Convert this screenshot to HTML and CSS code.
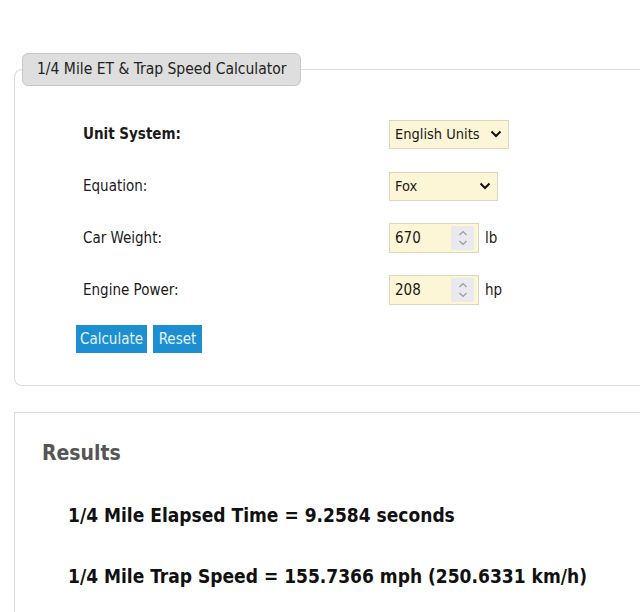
FILE: index.html
```html
<!DOCTYPE html>
<html lang="en">
<head>
    <meta charset="UTF-8">
    <meta name="viewport" content="width=device-width, initial-scale=1.0">
    <title>1/4 Mile ET &amp; Trap Speed Calculator</title>
    <link rel="stylesheet" href="styles.css">
</head>
<body>
    <fieldset class="calc">
        <legend>1/4 Mile ET &amp; Trap Speed Calculator</legend>
        <div class="form-grid">
            <label class="field-label strong">Unit System:</label>
            <div class="field">
                <div class="select wide">
                    <span>English Units</span>
                    <svg class="chev" width="12" height="8" viewBox="0 0 12 8"><path d="M1.5 1.5 L6 6 L10.5 1.5" fill="none" stroke="#111" stroke-width="2"/></svg>
                </div>
            </div>

            <label class="field-label">Equation:</label>
            <div class="field">
                <div class="select narrow">
                    <span>Fox</span>
                    <svg class="chev" width="12" height="8" viewBox="0 0 12 8"><path d="M1.5 1.5 L6 6 L10.5 1.5" fill="none" stroke="#111" stroke-width="2"/></svg>
                </div>
            </div>

            <label class="field-label">Car Weight:</label>
            <div class="field">
                <div class="num">
                    <span class="num-value">670</span>
                    <span class="spin">
                        <svg width="10" height="18" viewBox="0 0 10 18"><path d="M1.5 6 L5 2.5 L8.5 6 M1.5 12 L5 15.5 L8.5 12" fill="none" stroke="#9a9aa6" stroke-width="1.2"/></svg>
                    </span>
                </div>
                <span class="unit">lb</span>
            </div>

            <label class="field-label">Engine Power:</label>
            <div class="field">
                <div class="num">
                    <span class="num-value">208</span>
                    <span class="spin">
                        <svg width="10" height="18" viewBox="0 0 10 18"><path d="M1.5 6 L5 2.5 L8.5 6 M1.5 12 L5 15.5 L8.5 12" fill="none" stroke="#9a9aa6" stroke-width="1.2"/></svg>
                    </span>
                </div>
                <span class="unit">hp</span>
            </div>

            <div class="buttons">
                <button class="btn btn-calc">Calculate</button>
                <button class="btn btn-reset">Reset</button>
            </div>
        </div>
    </fieldset>

    <div class="results">
        <h2>Results</h2>
        <p class="result-line">1/4 Mile Elapsed Time = 9.2584 seconds</p>
        <p class="result-line">1/4 Mile Trap Speed = 155.7366 mph (250.6331 km/h)</p>
    </div>
</body>
</html>
```

FILE: styles.css
```css
* {
    box-sizing: border-box;
}

html, body {
    overflow: hidden;
}

body {
    margin: 0;
    background: #fff;
    color: #1a1a1a;
    font-family: "DejaVu Sans Condensed", "Noto Sans", sans-serif;
    font-size: 15px;
}

/* calculator panel runs off the right edge, like the original page */
.calc {
    margin: 53px 0 0 14px;
    padding: 0 0 32px 0;
    border: 1px solid #dcdcdc;
    border-right: none;
    border-radius: 8px 0 0 8px;
}

.calc legend {
    margin-left: 7px;
    padding: 7px 14px;
    background: #dedede;
    border: 1px solid #c8c8c8;
    border-radius: 6px;
    color: #222;
    font-size: 15.5px;
    line-height: 17px;
}

.form-grid {
    display: grid;
    grid-template-columns: 306px auto;
    row-gap: 22px;
    align-items: center;
    padding: 33px 0 0 68px;
}

.field-label {
    color: #1a1a1a;
}

.field-label.strong {
    font-weight: bold;
}

.field {
    display: flex;
    align-items: center;
    gap: 6px;
    height: 30px;
}

.select {
    display: flex;
    align-items: center;
    justify-content: space-between;
    height: 29px;
    padding: 0 6px 0 5px;
    background: #fdf6d6;
    border: 1px solid #dcd6c0;
    font-size: 14.5px;
}

.select.wide {
    width: 120px;
}

.select.narrow {
    width: 109px;
}

.num {
    display: flex;
    align-items: center;
    width: 90px;
    height: 30px;
    padding: 0 4px 0 5px;
    background: #fdf6d6;
    border: 1px solid #dcd6c0;
}

.num-value {
    flex: 1;
}

.spin {
    display: flex;
    align-items: center;
    justify-content: center;
    width: 23px;
    height: 24px;
    background: #e9e9ee;
}

.unit {
    color: #1a1a1a;
}

.buttons {
    grid-column: 1 / 3;
    display: flex;
    gap: 6px;
    margin: -2px 0 0 -7px;
}

.btn {
    height: 28px;
    padding: 0;
    border: none;
    background: #1b8fd1;
    color: #e6f3fc;
    font-family: inherit;
    font-size: 15px;
    text-align: center;
}

.btn-calc {
    width: 71px;
}

.btn-reset {
    width: 49px;
}

.results {
    margin: 26px 0 0 14px;
    padding: 28px 0 0 27px;
    border: 1px solid #dcdcdc;
    border-right: none;
    border-bottom: none;
    height: 200px;
}

.results h2 {
    margin: 0 0 39px 0;
    color: #555;
    font-size: 21px;
    font-weight: bold;
}

.result-line {
    margin: 0 0 39px 26px;
    color: #111;
    font-size: 19px;
    font-weight: bold;
}
```
